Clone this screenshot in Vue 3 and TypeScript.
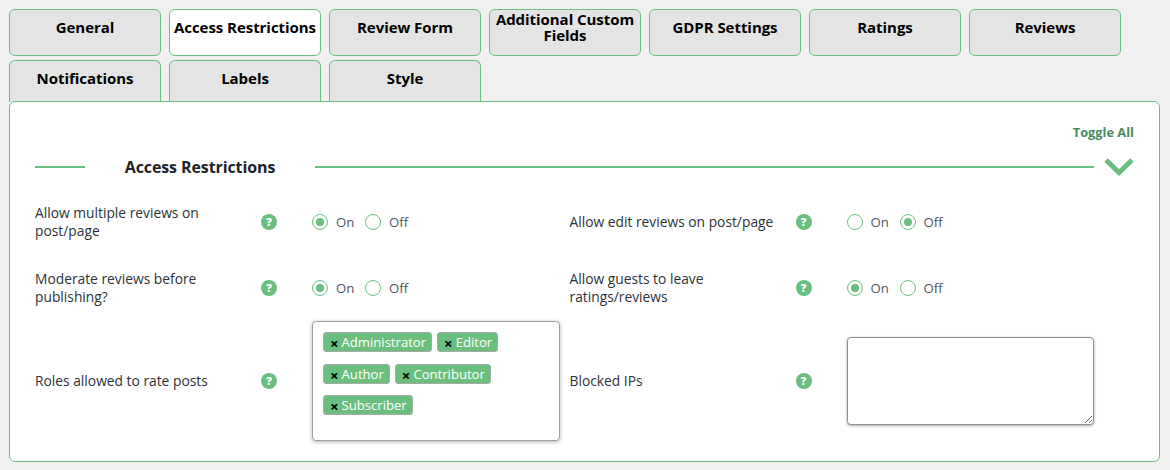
<script setup lang="ts">
const tabs = ['General','Access Restrictions','Review Form','Additional Custom Fields','GDPR Settings','Ratings','Reviews','Notifications','Labels','Style']
const rows1 = [
  { left: { label: 'Allow multiple reviews on post/page', on: true }, right: { label: 'Allow edit reviews on post/page', on: false } },
  { left: { label: 'Moderate reviews before publishing?', on: true }, right: { label: 'Allow guests to leave ratings/reviews', on: true } },
]
const roleRows = [['Administrator','Editor'],['Author','Contributor'],['Subscriber']]
</script>

<template>
  <div class="page">
    <div class="tabs">
      <div v-for="(t,i) in tabs" :key="t" class="tab" :class="{active: i===1, low: i>=7, wrap: i===3}">{{ t }}</div>
    </div>
    <div class="card">
      <div class="toggle">Toggle All</div>
      <div class="heading">
        <span class="line short"></span>
        <span class="title">Access Restrictions</span>
        <span class="line long"></span>
        <svg class="chev" width="30" height="20" viewBox="0 0 30 20"><path d="M2 3 L15 15.5 L28 3" fill="none" stroke="#6abf7f" stroke-width="5"/></svg>
      </div>
      <div v-for="(r,ri) in rows1" :key="ri" class="row">
        <div v-for="(c,ci) in [r.left, r.right]" :key="ci" class="cell">
          <div class="label">{{ c.label }}</div>
          <div class="help">?</div>
          <div class="radios">
            <span class="radio" :class="{sel: c.on}"></span><span class="rl">On</span>
            <span class="radio" :class="{sel: !c.on}"></span><span class="rl">Off</span>
          </div>
        </div>
      </div>
      <div class="row last">
        <div class="cell">
          <div class="label">Roles allowed to rate posts</div>
          <div class="help">?</div>
          <div class="multi">
            <div v-for="(rr,i) in roleRows" :key="i" class="chips">
              <span v-for="x in rr" :key="x" class="chip"><b>×</b>{{ x }}</span>
            </div>
          </div>
        </div>
        <div class="cell">
          <div class="label">Blocked IPs</div>
          <div class="help">?</div>
          <textarea class="ta"></textarea>
        </div>
      </div>
    </div>
  </div>
</template>

<style>
html, body { margin: 0; background: #f0f0f0; }
</style>
<style scoped>
.page { width: 1170px; height: 470px; box-sizing: border-box; padding: 9px 0 0 9px; background: #f0f0f0; font-family: "Open Sans", "Noto Sans", sans-serif; overflow: hidden; }
.tabs { display: flex; flex-wrap: wrap; column-gap: 8px; row-gap: 4px; width: 1130px; height: 92px; }
.tab { width: 152px; height: 47px; box-sizing: border-box; border: 1px solid #6abf7f; border-radius: 6px; background: #e4e4e4; text-align: center; font-weight: 700; font-size: 15px; line-height: 16px; color: #000; padding: 9px 0 0; letter-spacing: -0.05px; white-space: normal; }
.tab.wrap { padding-top: 1px; }
.tab.active { background: #fff; }
.tab.low { border-radius: 6px 6px 0 0; height: 42px; border-bottom: 0; }
.card { position: relative; z-index: 1; width: 1151px; height: 361px; box-sizing: border-box; border: 1px solid #6abf7f; border-radius: 6px; background: #fff; padding: 0 25px; }
.toggle { position: absolute; right: 25px; top: 21px; font-size: 12.8px; font-weight: 700; color: #4a8b5c; line-height: 18px; }
.heading { display: flex; align-items: center; height: 30px; margin-top: 50px; }
.line { height: 2px; background: #6abf7f; }
.short { width: 50px; flex: none; }
.title { width: 230px; flex: none; text-align: center; font-size: 16px; font-weight: 700; color: #1d2327; letter-spacing: -0.1px; }
.long { width: 779px; flex: none; }
.chev { margin-left: 10px; flex: none; }
.row { display: flex; height: 66px; }
.row:nth-of-type(3) { margin-top: 19px; }
.last { height: 120px; margin-top: -12px; }
.cell { display: flex; align-items: center; width: 534.5px; height: 42px; }
.row.last .cell { height: 120px; }
.label { width: 225px; flex: none; font-size: 13.8px; line-height: 18px; color: #2c3338; font-weight: 500; padding-right: 20px; box-sizing: border-box; }
.help { width: 16px; height: 16px; flex: none; border-radius: 50%; background: #6abf7f; color: #fff; font-size: 11px; font-weight: 800; text-align: center; line-height: 16px; margin-left: 1px; }
.radios { display: flex; align-items: center; height: 18px; line-height: 18px; margin-left: 35px; font-size: 13.2px; color: #50575e; }
.radio { width: 14px; height: 14px; border: 1px solid #6abf7f; border-radius: 50%; display: inline-flex; align-items: center; justify-content: center; flex: none; }
.radio.sel::after { content: ""; width: 8px; height: 8px; border-radius: 50%; background: #6abf7f; }
.rl { margin: 0 10px 0 8px; width: 19px; }
.multi { width: 248px; height: 120px; box-sizing: border-box; margin-left: 35px; background: #fff; border: 1px solid #a0a0a0; border-radius: 4px; box-shadow: 0 1px 4px rgba(0,0,0,.3); padding: 10px; }
.chips { display: flex; gap: 5px; height: 21px; margin-bottom: 10.5px; }
.chip { height: 20px; box-sizing: border-box; border: 1px solid #aaa; border-radius: 3px; background: #6abf7f; color: #fff; font-size: 13.1px; line-height: 18px; padding: 0 5px 0 6px; display: inline-flex; align-items: center; }
.chip b { color: #000; font-size: 15px; margin-right: 3px; font-weight: 700; line-height: 18px; position: relative; top: 1px; }
.ta { width: 247px; height: 88px; box-sizing: border-box; margin: 0 0 0 35px; background: #fff; border: 1px solid #8c8f94; border-radius: 4px; box-shadow: 0 1px 3px rgba(0,0,0,.35); outline: none; }
</style>
